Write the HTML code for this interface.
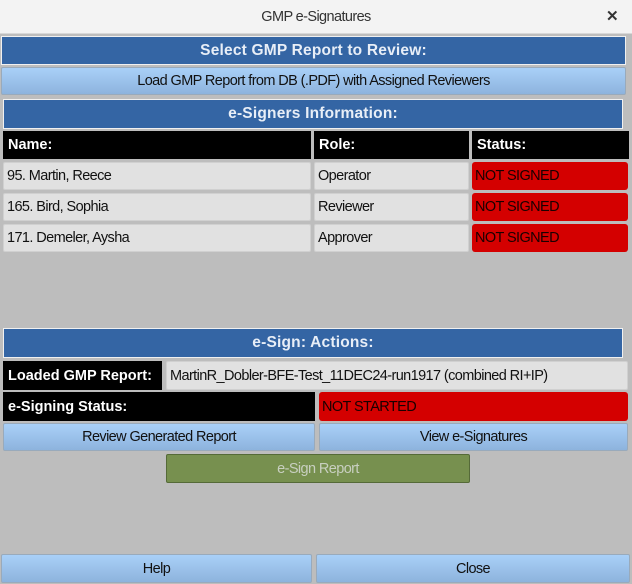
<!DOCTYPE html>
<html><head><style>
*{margin:0;padding:0;box-sizing:border-box}
body{width:632px;height:584px;background:#bdbdbd;font-family:"Liberation Sans",sans-serif;font-size:14.5px;letter-spacing:-0.6px;position:relative;overflow:hidden}
.a{position:absolute;display:flex;align-items:center}
.tb{left:0;top:0;width:632px;height:34px;background:#f3f3f3;justify-content:center;color:#333;border-bottom:1px solid #d8d8d8}
.x{position:absolute;right:14px;top:7px;font-size:15px;font-weight:bold;color:#333}
.h{background:#3465a4;color:#e8eef7;font-weight:bold;justify-content:center;border:1px solid #f0f0f0;font-size:15.5px;letter-spacing:0.2px}
.btn{background:linear-gradient(#a9d0f8,#8db3dd);justify-content:center;color:#111;border-radius:2px;border:1px solid #9ab;}
.k{background:#000;color:#fff;font-weight:bold;padding-left:5px;letter-spacing:0}
.c{background:#e1e1e1;color:#111;padding-left:3px;border-radius:2px;border:1px solid #d0d0d0}
.r{background:#d40000;color:#1a0000;padding-left:3px;border-radius:3px}
.g{background:#77904f;color:#c8cfc0;justify-content:center;border:1px solid #556a38;border-radius:2px}
</style></head><body>
<div class="a tb">GMP e-Signatures</div><div class="x">✕</div>
<div class="a h" style="left:1px;top:36px;width:625px;height:29px">Select GMP Report to Review:</div>
<div class="a btn" style="left:1px;top:67px;width:625px;height:28px">Load GMP Report from DB (.PDF) with Assigned Reviewers</div>
<div class="a h" style="left:3px;top:99px;width:620px;height:30px">e-Signers Information:</div>
<div class="a k" style="left:3px;top:131px;width:308px;height:28px">Name:</div>
<div class="a k" style="left:314px;top:131px;width:155px;height:28px">Role:</div>
<div class="a k" style="left:472px;top:131px;width:157px;height:28px">Status:</div>
<div class="a c" style="left:3px;top:162px;width:308px;height:28px">95. Martin, Reece</div>
<div class="a c" style="left:314px;top:162px;width:155px;height:28px">Operator</div>
<div class="a r" style="left:472px;top:162px;width:156px;height:28px">NOT SIGNED</div>
<div class="a c" style="left:3px;top:193px;width:308px;height:28px">165. Bird, Sophia</div>
<div class="a c" style="left:314px;top:193px;width:155px;height:28px">Reviewer</div>
<div class="a r" style="left:472px;top:193px;width:156px;height:28px">NOT SIGNED</div>
<div class="a c" style="left:3px;top:224px;width:308px;height:28px">171. Demeler, Aysha</div>
<div class="a c" style="left:314px;top:224px;width:155px;height:28px">Approver</div>
<div class="a r" style="left:472px;top:224px;width:156px;height:28px">NOT SIGNED</div>
<div class="a h" style="left:3px;top:328px;width:620px;height:30px">e-Sign: Actions:</div>
<div class="a k" style="left:3px;top:361px;width:159px;height:29px">Loaded GMP Report:</div>
<div class="a c" style="left:166px;top:361px;width:462px;height:29px">MartinR_Dobler-BFE-Test_11DEC24-run1917 (combined RI+IP)</div>
<div class="a k" style="left:3px;top:392px;width:312px;height:29px">e-Signing Status:</div>
<div class="a r" style="left:319px;top:392px;width:309px;height:29px">NOT STARTED</div>
<div class="a btn" style="left:3px;top:423px;width:312px;height:28px">Review Generated Report</div>
<div class="a btn" style="left:319px;top:423px;width:309px;height:28px">View e-Signatures</div>
<div class="a g" style="left:166px;top:454px;width:304px;height:29px">e-Sign Report</div>
<div class="a btn" style="left:1px;top:554px;width:311px;height:29px">Help</div>
<div class="a btn" style="left:316px;top:554px;width:314px;height:29px">Close</div>
</body></html>
